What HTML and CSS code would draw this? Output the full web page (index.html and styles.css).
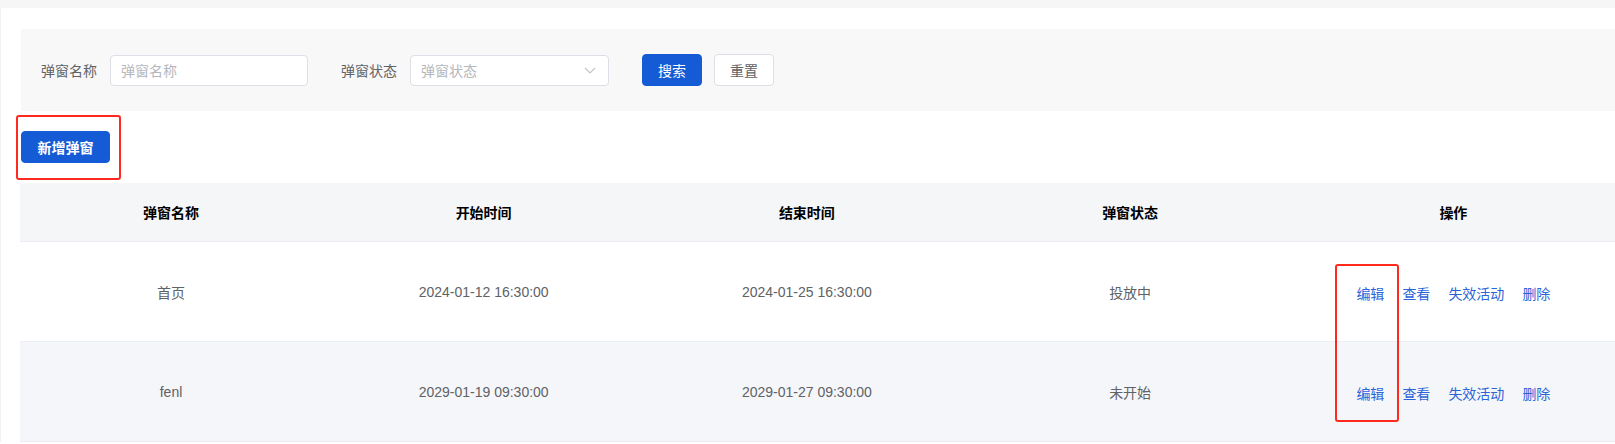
FILE: index.html
```html
<!DOCTYPE html>
<html lang="zh-CN">
<head>
<meta charset="utf-8">
<title>弹窗管理</title>
<link rel="stylesheet" href="styles.css">
</head>
<body>
<div class="topband"></div>
<main class="page">
  <section class="search">
    <label class="field">
      <span class="field-label">弹窗名称</span>
      <span class="input"><span class="placeholder">弹窗名称</span></span>
    </label>
    <label class="field field-select">
      <span class="field-label">弹窗状态</span>
      <span class="input select">
        <span class="placeholder">弹窗状态</span>
        <svg class="chevron" width="12" height="7" viewBox="0 0 12 7"><path d="M1 1l5 5 5-5" fill="none" stroke="#c0c4cc" stroke-width="1.2"/></svg>
      </span>
    </label>
    <button class="btn btn-primary">搜索</button>
    <button class="btn btn-default">重置</button>
  </section>

  <div class="toolbar">
    <button class="btn btn-primary btn-add">新增弹窗</button>
    <span class="mark mark-add"></span>
  </div>

  <div class="table">
    <div class="row head">
      <div class="cell">弹窗名称</div>
      <div class="cell">开始时间</div>
      <div class="cell">结束时间</div>
      <div class="cell">弹窗状态</div>
      <div class="cell">操作</div>
    </div>
    <div class="row">
      <div class="cell">首页</div>
      <div class="cell">2024-01-12 16:30:00</div>
      <div class="cell">2024-01-25 16:30:00</div>
      <div class="cell">投放中</div>
      <div class="cell ops"><a>编辑</a><a>查看</a><a>失效活动</a><a>删除</a></div>
    </div>
    <div class="row striped">
      <div class="cell">fenl</div>
      <div class="cell">2029-01-19 09:30:00</div>
      <div class="cell">2029-01-27 09:30:00</div>
      <div class="cell">未开始</div>
      <div class="cell ops"><a>编辑</a><a>查看</a><a>失效活动</a><a>删除</a></div>
    </div>
    <span class="mark mark-edit"></span>
  </div>
</main>
</body>
</html>
```

FILE: styles.css
```css
* { box-sizing: border-box; }
html, body { margin: 0; padding: 0; background: #fff; }
body {
  font-family: "Liberation Sans", "Noto Sans CJK SC", sans-serif;
  color: #606266;
  width: 1615px;
  height: 444px;
  overflow: hidden;
}
.topband { height: 8px; background: #f6f6f6; }
.page {
  border-left: 1px solid #f2f2f2;
  padding: 21px 0 0 19px;
}
.search {
  height: 82px;
  margin-left: 1px;
  background: #f8f8f8;
  display: flex;
  align-items: center;
  padding-left: 20px;
}
.field { display: flex; align-items: center; }
.field-label { font-size: 14px; color: #606266; margin-right: 13px; }
.field-select { margin-left: 33px; }
.input {
  width: 198px;
  height: 31px;
  background: #fff;
  border: 1px solid #dcdfe6;
  border-radius: 4px;
  display: flex;
  align-items: center;
  padding: 0 10px;
  font-size: 14px;
}
.select { width: 199px; justify-content: space-between; padding-right: 12px; }
.placeholder { color: #b4b7bd; }
.chevron { display: block; }
.btn {
  height: 32px;
  width: 60px;
  border-radius: 4px;
  font-family: inherit;
  font-size: 14px;
  cursor: pointer;
  padding: 0;
}
.btn-primary { background: #155bd5; border: 1px solid #155bd5; color: #fff; }
.search .btn-primary { margin-left: 33px; }
.btn-default { background: #fff; border: 1px solid #dcdfe6; color: #606266; margin-left: 12px; }
.toolbar {
  position: relative;
  padding: 20px 0 20px 1px;
}
.btn-add { width: 89px; font-weight: bold; display: block; }
.mark {
  position: absolute;
  border: 2px solid #ff2a1f;
  border-radius: 3px;
}
.mark-add { left: -4px; top: 4px; width: 105px; height: 65px; }
.table { position: relative; width: 1595px; }
.row {
  display: grid;
  grid-template-columns: 302px repeat(4, 1fr);
  height: 100px;
  align-items: center;
  border-bottom: 1px solid #ebeef4;
  font-size: 14px;
  color: #606266;
}
.row.head {
  height: 59px;
  background: #f5f6f8;
  color: #000;
  font-weight: bold;
}
.row.striped { background: #f5f6f9; }
.cell { text-align: center; white-space: nowrap; }
.cell.ops { display: flex; justify-content: center; gap: 18px; padding-top: 2px; }
.ops a { color: #2c64d8; font-size: 14px; cursor: pointer; }
.mark-edit { left: 1315px; top: 81px; width: 64px; height: 158px; }
```
